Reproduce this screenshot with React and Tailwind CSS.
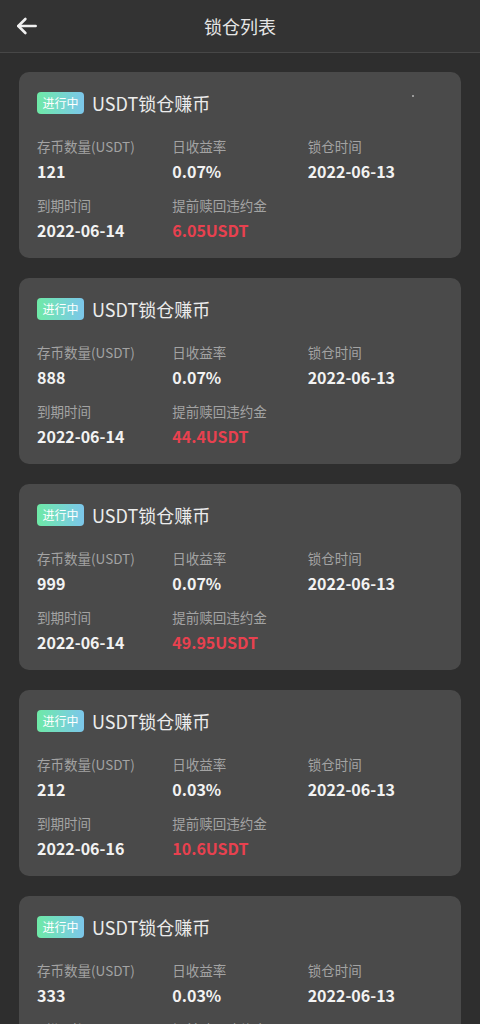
import React from "react";

const records = [
  { amount: "121", rate: "0.07%", start: "2022-06-13", end: "2022-06-14", penalty: "6.05USDT" },
  { amount: "888", rate: "0.07%", start: "2022-06-13", end: "2022-06-14", penalty: "44.4USDT" },
  { amount: "999", rate: "0.07%", start: "2022-06-13", end: "2022-06-14", penalty: "49.95USDT" },
  { amount: "212", rate: "0.03%", start: "2022-06-13", end: "2022-06-16", penalty: "10.6USDT" },
  { amount: "333", rate: "0.03%", start: "2022-06-13", end: "2022-06-14", penalty: "16.65USDT" },
];

const Cell = ({ label, value, red }) => (
  <div className="flex flex-col">
    <span className="text-[13.5px] leading-[18px] text-[#a3a3a3] whitespace-nowrap">{label}</span>
    <span
      className={
        "mt-[5px] text-[16px] leading-[22px] font-bold " +
        (red ? "text-[#e8414f]" : "text-[#f2f2f2]")
      }
    >
      {value}
    </span>
  </div>
);

const LockCard = ({ item, dot }) => (
  <div className="relative rounded-[10px] bg-[#4a4a4a] px-[18px] pt-[20px] pb-[17px]">
    {dot && <span className="absolute left-[393px] top-[23px] w-[2px] h-[2px] bg-[#9a9a9a]" />}
    <div className="flex items-center h-[22px]">
      <span className="h-[22px] px-[5.5px] rounded-[4px] bg-gradient-to-r from-[#6ee9a6] to-[#7cc6ea] text-white text-[12px] leading-[22px]">
        进行中
      </span>
      <span className="ml-[8px] text-[18px] text-[#ececec]">USDT锁仓赚币</span>
    </div>
    <div className="grid grid-cols-3 mt-[23px]">
      <Cell label="存币数量(USDT)" value={item.amount} />
      <Cell label="日收益率" value={item.rate} />
      <Cell label="锁仓时间" value={item.start} />
    </div>
    <div className="grid grid-cols-3 mt-[14px]">
      <Cell label="到期时间" value={item.end} />
      <Cell label="提前赎回违约金" value={item.penalty} red />
    </div>
  </div>
);

export default function App() {
  return (
    <div
      className="min-h-screen bg-[#2e2e2e]"
      style={{ fontFamily: '"Noto Sans CJK SC", "Noto Sans", sans-serif' }}
    >
      <div className="relative h-[53px] bg-[#333333] border-b border-[#474747] flex items-center justify-center">
        <button className="absolute left-[14px] top-[13px] text-[#f0f0f0]">
          <svg width="26" height="26" viewBox="0 0 24 24" fill="none" stroke="currentColor" strokeWidth="2.4" strokeLinecap="round" strokeLinejoin="round">
            <path d="M20 12H4" />
            <path d="M10.5 5.5L4 12l6.5 6.5" />
          </svg>
        </button>
        <h1 className="text-[18px] text-[#e6e6e6]">锁仓列表</h1>
      </div>
      <div className="flex flex-col gap-[20px] px-[19px] pt-[19px] pb-[20px]">
        {records.map((r, i) => (
          <LockCard key={i} item={r} dot={i === 0} />
        ))}
      </div>
    </div>
  );
}
